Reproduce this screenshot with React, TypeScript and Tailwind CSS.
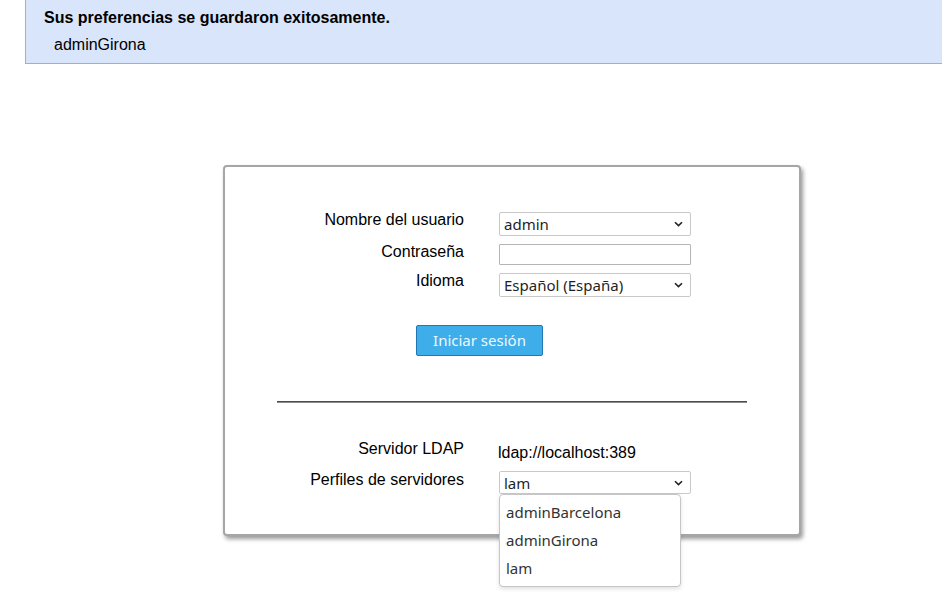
import React from "react";

const sans = { fontFamily: '"Liberation Sans", Arial, sans-serif' };

function Chevron() {
  return (
    <svg
      className="pointer-events-none absolute right-[8px] top-1/2 -translate-y-1/2"
      width="9"
      height="6"
      viewBox="0 0 9 6"
      fill="none"
    >
      <path d="M1 1.2 L4.5 4.6 L8 1.2" stroke="#222" strokeWidth="1.6" />
    </svg>
  );
}

function FakeSelect({ value, className = "" }: { value: string; className?: string }) {
  return (
    <div className={`relative w-[192px] ${className}`}>
      <select
        defaultValue={value}
        className="block h-full w-full appearance-none rounded-[2px] border border-[#c9c9c9] bg-white pl-[4px] pr-[20px] text-[15px] leading-[20px] text-[#1f1f1f] font-['Noto_Sans',sans-serif] outline-none"
      >
        <option>{value}</option>
      </select>
      <Chevron />
    </div>
  );
}

export default function App() {
  return (
    <div className="min-h-[610px] bg-white pb-[60px] text-black" style={sans}>
      {/* status message */}
      <div className="ml-[25px] border-b border-l border-[#8fb2ef] bg-[#d9e5fb] pb-[9px] pl-[18px] pt-[9px] text-[16px]">
        <div className="font-bold leading-[18px]">Sus preferencias se guardaron exitosamente.</div>
        <div className="mt-[9px] pl-[10px] leading-[18px]">adminGirona</div>
      </div>

      {/* login box */}
      <div className="ml-[223px] mt-[101px] w-[578px] rounded-[4px] border-2 border-[#a6a6a6] bg-white pb-[40px] pt-[44px] shadow-[2px_3px_4px_rgba(0,0,0,0.4)]">
        <div className="grid grid-cols-[239px_192px] gap-x-[35px] text-[16px] leading-[18px]">
          <div className="text-right">Nombre del usuario</div>
          <FakeSelect value="admin" className="mt-[1px] h-[24px]" />

          <div className="mt-[7px] text-right">Contraseña</div>
          <input
            type="password"
            className="mt-[8px] block h-[21px] w-[192px] rounded-[1px] border border-[#b5b5b5] bg-white outline-none"
          />

          <div className="mt-[7px] text-right">Idioma</div>
          <FakeSelect value="Español (España)" className="mt-[8px] h-[24px]" />
        </div>

        <button
          type="button"
          className="ml-[191px] mt-[28px] block h-[31px] w-[127px] rounded-[2px] border border-[#2277b1] bg-[#3daee9] text-[15px] text-[#eef8fe] font-['Noto_Sans',sans-serif]"
        >
          Iniciar sesión
        </button>

        <div className="mx-auto mt-[45px] h-[2px] w-[470px] border-t border-b border-t-[#4d4d4d] border-b-[#8a8a8a]" />

        <div className="mt-[37px] grid grid-cols-[239px_192px] gap-x-[35px] text-[16px] leading-[18px]">
          <div className="text-right">Servidor LDAP</div>
          <div className="-ml-[1px] pt-[4px]">ldap://localhost:389</div>

          <div className="mt-[9px] text-right">Perfiles de servidores</div>
          <div className="relative mt-[9px] h-[23px]">
            <FakeSelect value="lam" className="h-[23px]" />
            <ul className="absolute left-0 top-full z-10 w-[182px] rounded-[4px] border border-[#c6c6c6] bg-white pb-[4px] pt-[3px] text-[15px] text-[#333] shadow-[0_2px_4px_rgba(0,0,0,0.12)] font-['Noto_Sans',sans-serif]">
              {["adminBarcelona", "adminGirona", "lam"].map((p) => (
                <li key={p} className="h-[28px] pl-[6px] leading-[28px]">
                  {p}
                </li>
              ))}
            </ul>
          </div>
        </div>
      </div>
    </div>
  );
}
